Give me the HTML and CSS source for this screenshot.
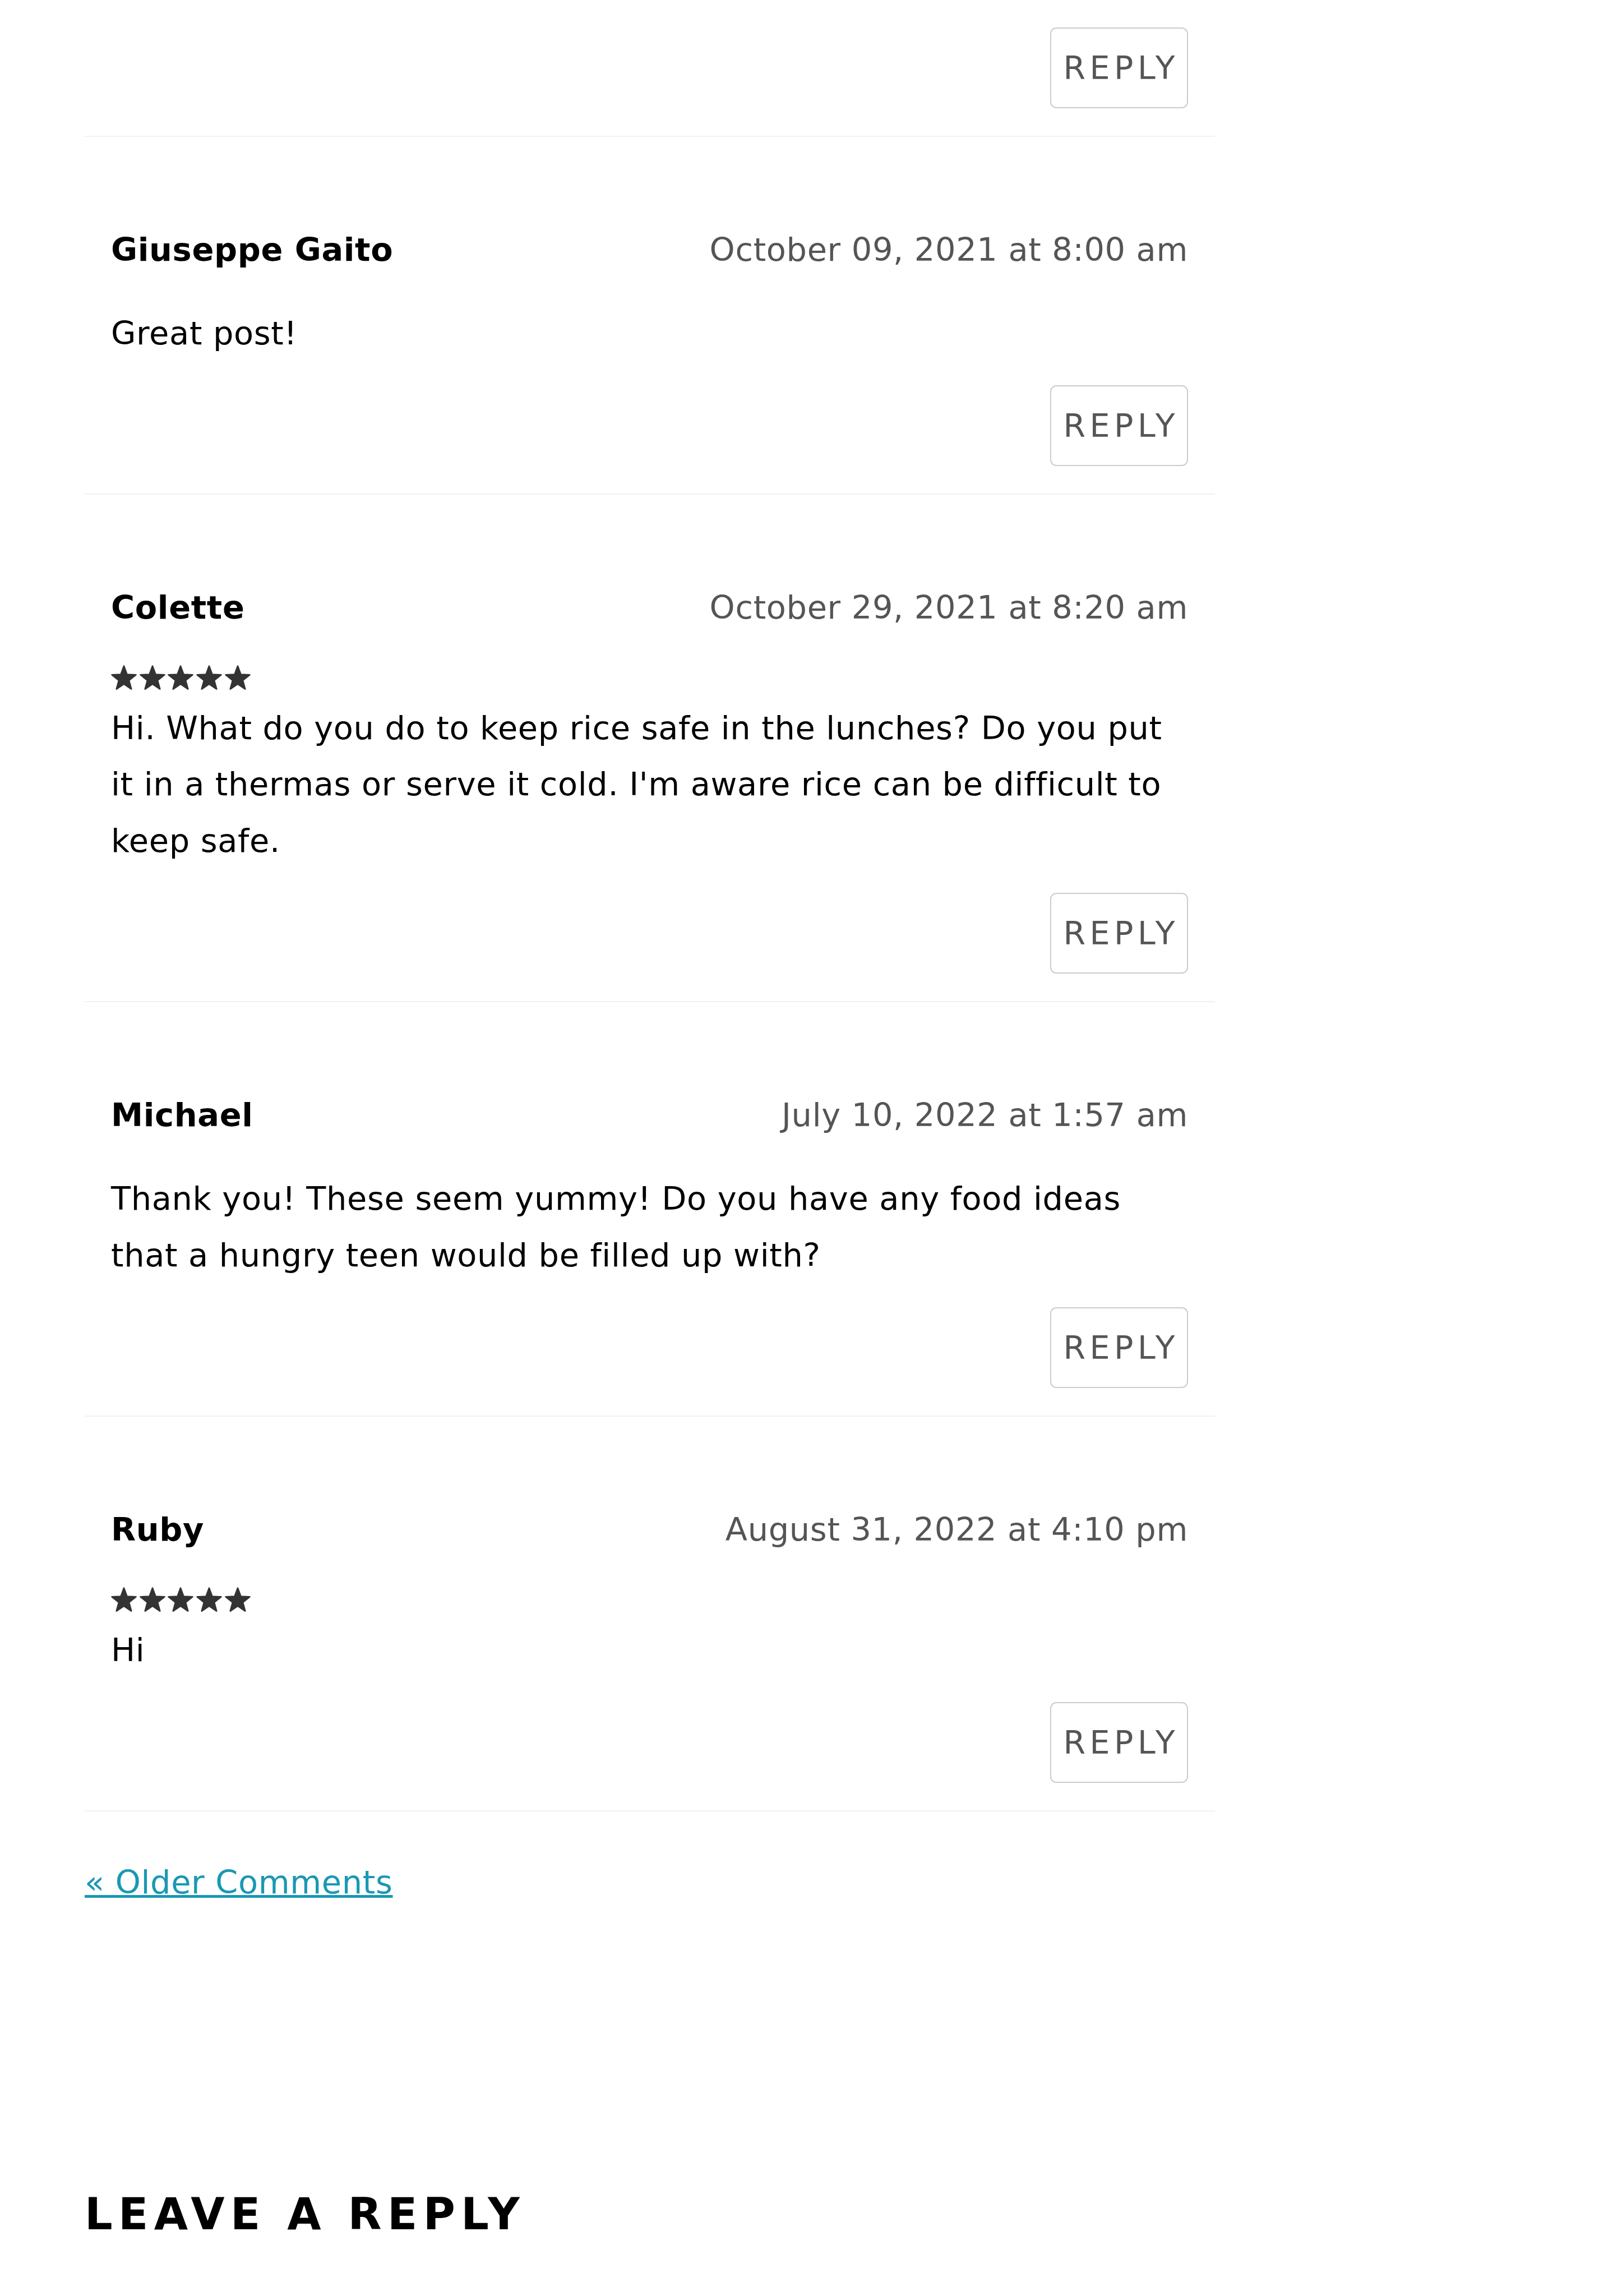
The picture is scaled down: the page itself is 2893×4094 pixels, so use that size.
FILE: index.html
```html
<!DOCTYPE html>
<html lang="en">
<head>
<meta charset="utf-8">
<title>Comments</title>
<link rel="stylesheet" href="styles.css">
</head>
<body>
<svg class="defs" aria-hidden="true">
  <defs>
    <symbol id="star" viewBox="-1 -3 102 96">
      <polygon points="50,0 62.3,33.1 97.55,34.55 69.9,56.5 79.39,90.45 50,71 20.61,90.45 30.1,56.5 2.45,34.55 37.7,33.1" stroke="currentColor" stroke-width="6" stroke-linejoin="round"/>
    </symbol>
  </defs>
</svg>
<main class="page">
  <ol class="comment-list">
    <li class="comment comment--tail">
      <div class="reply"><a class="reply-link" href="#">Reply</a></div>
    </li>
    <li class="comment">
      <div class="comment-meta">
        <b class="comment-author">Giuseppe Gaito</b>
        <time class="comment-date">October 09, 2021 at 8:00 am</time>
      </div>
      <div class="comment-text"><p>Great post!</p></div>
      <div class="reply"><a class="reply-link" href="#">Reply</a></div>
    </li>
    <li class="comment">
      <div class="comment-meta">
        <b class="comment-author">Colette</b>
        <time class="comment-date">October 29, 2021 at 8:20 am</time>
      </div>
      <div class="rating">
        <svg class="star"><use href="#star"/></svg>
        <svg class="star"><use href="#star"/></svg>
        <svg class="star"><use href="#star"/></svg>
        <svg class="star"><use href="#star"/></svg>
        <svg class="star"><use href="#star"/></svg>
      </div>
      <div class="comment-text"><p>Hi. What do you do to keep rice safe in the lunches? Do you put it in a thermas or serve it cold. I'm aware rice can be difficult to keep safe.</p></div>
      <div class="reply"><a class="reply-link" href="#">Reply</a></div>
    </li>
    <li class="comment">
      <div class="comment-meta">
        <b class="comment-author">Michael</b>
        <time class="comment-date">July 10, 2022 at 1:57 am</time>
      </div>
      <div class="comment-text"><p>Thank you! These seem yummy! Do you have any food ideas that a hungry teen would be filled up with?</p></div>
      <div class="reply"><a class="reply-link" href="#">Reply</a></div>
    </li>
    <li class="comment">
      <div class="comment-meta">
        <b class="comment-author">Ruby</b>
        <time class="comment-date">August 31, 2022 at 4:10 pm</time>
      </div>
      <div class="rating">
        <svg class="star"><use href="#star"/></svg>
        <svg class="star"><use href="#star"/></svg>
        <svg class="star"><use href="#star"/></svg>
        <svg class="star"><use href="#star"/></svg>
        <svg class="star"><use href="#star"/></svg>
      </div>
      <div class="comment-text"><p>Hi</p></div>
      <div class="reply"><a class="reply-link" href="#">Reply</a></div>
    </li>
  </ol>
  <nav class="comments-nav"><a href="#">« Older Comments</a></nav>
  <h3 class="reply-title">Leave a Reply</h3>
</main>
</body>
</html>
```
FILE: styles.css
```css
html, body {
  margin: 0;
  padding: 0;
  background: #fff;
}

body {
  font-family: "DejaVu Sans", "Noto Sans", sans-serif;
  font-size: 57.4px;
  line-height: 100.5px;
  letter-spacing: 0.65px;
  color: #000;
}

.defs {
  position: absolute;
  width: 0;
  height: 0;
  overflow: hidden;
}

.page {
  width: 2016px;
  padding-left: 151px;
}

.comment-list {
  list-style: none;
  margin: 0;
  padding: 0;
}

.comment {
  padding: 152.6px 48px 48.5px 47px;
  border-bottom: 2.6px solid #f1f1f1;
}

.comment--tail {
  padding-top: 7px;
}

.comment-meta {
  display: flex;
  justify-content: space-between;
  align-items: baseline;
  margin-bottom: 48.3px;
}

.comment-author {
  font-weight: bold;
}

.comment-date {
  color: #555;
}

.comment-text p {
  margin: 0;
}

.rating {
  display: flex;
  gap: 4.7px;
  height: 65.5px;
  padding-top: 3px;
  box-sizing: border-box;
  color: #333;
}

.star {
  width: 46px;
  height: 44px;
  fill: #333;
}

.reply {
  display: flex;
  justify-content: flex-end;
  margin-top: 42px;
}

.reply-link {
  box-sizing: border-box;
  width: 246px;
  height: 144px;
  border: 2.6px solid #ccc;
  border-radius: 11px;
  display: flex;
  align-items: center;
  justify-content: center;
  padding-left: 7.5px;
  font-size: 57px;
  letter-spacing: 7.5px;
  text-transform: uppercase;
  color: #555;
  text-decoration: none;
}

.comments-nav {
  margin-top: 77.5px;
}

.comments-nav a {
  color: #1a98b3;
  text-decoration: underline;
}

.reply-title {
  margin: 493px 0 0;
  font-size: 78px;
  line-height: 94px;
  font-weight: bold;
  letter-spacing: 10.4px;
  text-transform: uppercase;
}
```
